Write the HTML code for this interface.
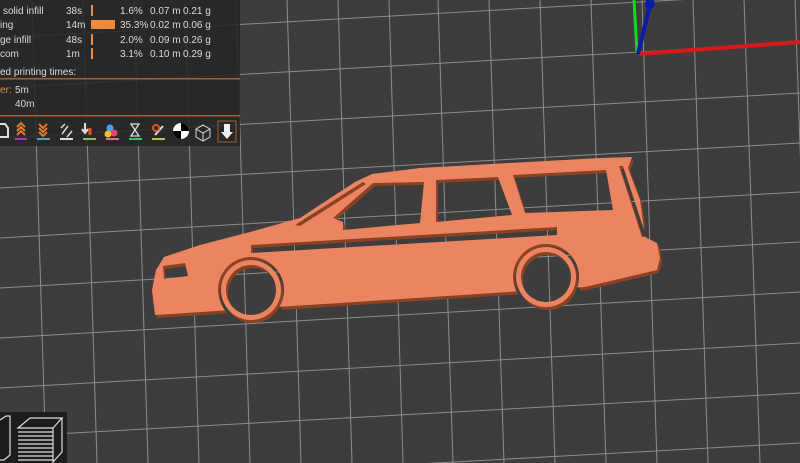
<!DOCTYPE html>
<html><head><meta charset="utf-8"><style>
html,body{margin:0;padding:0;width:800px;height:463px;overflow:hidden;background:#3d3d3d}
svg{position:absolute;left:0;top:0;display:block}
.t{font-family:"Liberation Sans",sans-serif;font-size:10px;fill:#dcdcdc}
</style></head><body>
<svg width="800" height="463" viewBox="0 0 800 463">
<rect width="800" height="463" fill="#3d3d3d"/>
<g stroke="#9c9c9c" stroke-width="1" opacity="0.85">
<line x1="32" y1="0" x2="46" y2="463"/>
<line x1="83" y1="0" x2="97" y2="463"/>
<line x1="134" y1="0" x2="148" y2="463"/>
<line x1="185" y1="0" x2="199" y2="463"/>
<line x1="236" y1="0" x2="250" y2="463"/>
<line x1="287" y1="0" x2="301" y2="463"/>
<line x1="338" y1="0" x2="352" y2="463"/>
<line x1="389" y1="0" x2="403" y2="463"/>
<line x1="438" y1="0" x2="453" y2="463"/>
<line x1="489" y1="0" x2="504" y2="463"/>
<line x1="540" y1="0" x2="555" y2="463"/>
<line x1="591" y1="0" x2="606" y2="463"/>
<line x1="642" y1="0" x2="657" y2="463"/>
<line x1="693" y1="0" x2="708" y2="463"/>
<line x1="744" y1="0" x2="760" y2="463"/>
<line x1="795" y1="0" x2="811" y2="463"/>
<line x1="0" y1="38" x2="800" y2="-7"/>
<line x1="0" y1="88" x2="800" y2="43"/>
<line x1="0" y1="138" x2="800" y2="93"/>
<line x1="0" y1="188" x2="800" y2="143"/>
<line x1="0" y1="238" x2="800" y2="192"/>
<line x1="0" y1="288" x2="800" y2="242"/>
<line x1="0" y1="338" x2="800" y2="292"/>
<line x1="0" y1="388" x2="800" y2="343"/>
<line x1="0" y1="437" x2="800" y2="393"/>
<line x1="0" y1="487" x2="800" y2="443"/>
</g>
<defs>
<mask id="m" maskUnits="userSpaceOnUse" x="0" y="0" width="800" height="463">
<path fill="#fff" d="M155,315 L585,287 L657,270 L660,258 L657,243 L645,237 L640,200 L628,168 L632,157 L600,158 L420,168 L372,174 L355,182 L300,218 L250,232 L200,245 L164,257 L156,270 L152,290 Z"/>
<circle cx="251" cy="290" r="33" fill="#000"/>
<circle cx="546" cy="277" r="33" fill="#000"/>
<circle cx="251" cy="290" r="30" fill="#fff"/>
<circle cx="546" cy="277" r="30" fill="#fff"/>
<circle cx="251" cy="290" r="25" fill="#000"/>
<circle cx="546" cy="277" r="25" fill="#000"/>
<g fill="#000">
<path d="M333,218 L343,222 L343,230 L420,223 L424,182 L373,183 Z"/>
<path d="M436,180 L498,177 L512,215 L436,222 Z"/>
<path d="M513,175 L606,170 L613,210 L525,213 Z"/>
<path d="M251,245 L557,227 L557,235 L251,253 Z"/>
<path d="M295,225 L363,182 L366,184 L300,226 Z"/>
<path d="M619,166 L623,166 L646,236 L642,237 Z"/>
<path d="M163,266 L185,263 L188,276 L164,279 Z"/>
</g>
</mask>
<g id="car"><rect x="140" y="150" width="530" height="180" mask="url(#m)"/></g>
</defs>
<use href="#car" x="2" y="3" fill="#8a4222"/>
<use href="#car" fill="#ec8461"/>
<line x1="637" y1="52" x2="634" y2="0" stroke="#1bd31b" stroke-width="3"/>
<line x1="639" y1="54" x2="800" y2="42" stroke="#d81a1a" stroke-width="4"/>
<line x1="638" y1="54" x2="650" y2="5" stroke="#0b1aa8" stroke-width="4"/>
<circle cx="650" cy="4" r="5" fill="#0b1aa8"/>
<rect x="0" y="0" width="240" height="146" fill="#262626" opacity="0.88"/>
<text class="t" x="3" y="14">solid infill</text><text class="t" x="66" y="14">38s</text>
<rect x="91" y="5" width="2" height="11" fill="#ef8a3c"/>
<text class="t" x="120" y="14">1.6%</text><text class="t" x="150" y="14">0.07 m</text><text class="t" x="183" y="14">0.21 g</text>
<text class="t" x="0" y="28">ing</text><text class="t" x="66" y="28">14m</text>
<rect x="91" y="20" width="24" height="9" fill="#ef8a3c"/>
<text class="t" x="120" y="28">35.3%</text><text class="t" x="150" y="28">0.02 m</text><text class="t" x="183" y="28">0.06 g</text>
<text class="t" x="0" y="43">ge infill</text><text class="t" x="66" y="43">48s</text>
<rect x="91" y="34" width="2" height="11" fill="#ef8a3c"/>
<text class="t" x="120" y="43">2.0%</text><text class="t" x="150" y="43">0.09 m</text><text class="t" x="183" y="43">0.26 g</text>
<text class="t" x="0" y="57">com</text><text class="t" x="66" y="57">1m</text>
<rect x="91" y="48" width="2" height="11" fill="#ef8a3c"/>
<text class="t" x="120" y="57">3.1%</text><text class="t" x="150" y="57">0.10 m</text><text class="t" x="183" y="57">0.29 g</text>
<text class="t" x="0" y="75">ed printing times:</text>
<rect x="0" y="78" width="240" height="1.5" fill="#a0603a"/>
<text class="t" x="0" y="93" style="fill:#d98a45">er:</text><text class="t" x="15" y="93">5m</text>
<text class="t" x="15" y="107">40m</text>
<rect x="0" y="115" width="240" height="1.5" fill="#a0603a"/>
<g stroke-width="2" fill="none">
<path d="M0,124 L5,124 L8,128 L8,137 L0,137" stroke="#ddd"/>
<path d="M17,131 L21,127 L25,131 M17,135 L21,131 L25,135 M17,127 L21,123 L25,127" stroke="#e07a2a"/>
<line x1="15" y1="139" x2="27" y2="139" stroke="#b92fc9"/>
<path d="M39,124 L43,128 L47,124 M39,128 L43,132 L47,128 M39,132 L43,136 L47,132" stroke="#e07a2a"/>
<line x1="37" y1="139" x2="50" y2="139" stroke="#4fa0c8"/>
<path d="M62,134 L68,126 M61,128 L65,124 M67,137 L72,131" stroke="#ddd" stroke-width="1.5"/>
<line x1="60" y1="139" x2="73" y2="139" stroke="#ddd"/>
<path d="M85,123 L85,131 M82,129 L85,133 L88,129" stroke="#ddd"/>
<path d="M90,128 L90,135" stroke="#e0562a" stroke-width="3"/>
<line x1="83" y1="139" x2="96" y2="139" stroke="#8cbf5a"/>
<line x1="106" y1="139" x2="119" y2="139" stroke="#e07090"/>
<path d="M131,124 L139,124 L135,130 L139,136 L131,136 L135,130 Z" stroke="#ddd" stroke-width="1.3"/>
<line x1="129" y1="139" x2="142" y2="139" stroke="#3fc06a"/>
<path d="M155,135 L163,126" stroke="#ddd"/>
<circle cx="156" cy="128" r="3" stroke="#e0562a"/>
<line x1="152" y1="139" x2="165" y2="139" stroke="#c0c040"/>
<path d="M203,125 L210,129 L210,137 L203,141 L196,137 L196,129 Z M196,129 L203,133 L210,129 M203,133 L203,141" stroke="#ddd" stroke-width="1"/>
<rect x="218" y="121" width="18" height="21" stroke="#a0603a" stroke-width="1"/>
</g>
<circle cx="110" cy="128" r="3.5" fill="#4aa0ff"/><circle cx="114" cy="133" r="3.5" fill="#e84070"/><circle cx="108" cy="134" r="3.5" fill="#f0c030"/>
<circle cx="181" cy="131" r="8" fill="#fff"/>
<path d="M181,123 A8,8 0 0 1 189,131 L181,131 Z M181,131 L181,139 A8,8 0 0 1 173,131 Z" fill="#000"/>
<path d="M224,124 L230,124 L230,132 L233,132 L227,139 L221,132 L224,132 Z" fill="#eee"/>
<rect x="0" y="412" width="67" height="51" fill="#1c1c1c"/>
<g stroke="#ddd" fill="none" stroke-width="1.2">
<path d="M0,420 L6,416 L10,416 L10,455 L4,460 L0,460"/>
<path d="M18,428 L30,418 L62,418 L53,428 Z"/>
<path d="M53,428 L53,463 M62,418 L62,452 L53,462"/>
<path d="M18,432 L53,432 M18,436 L53,436 M18,440 L53,440 M18,444 L53,444 M18,448 L53,448 M18,452 L53,452 M18,456 L53,456 M18,460 L53,460"/>
</g>
</svg>
</body></html>
